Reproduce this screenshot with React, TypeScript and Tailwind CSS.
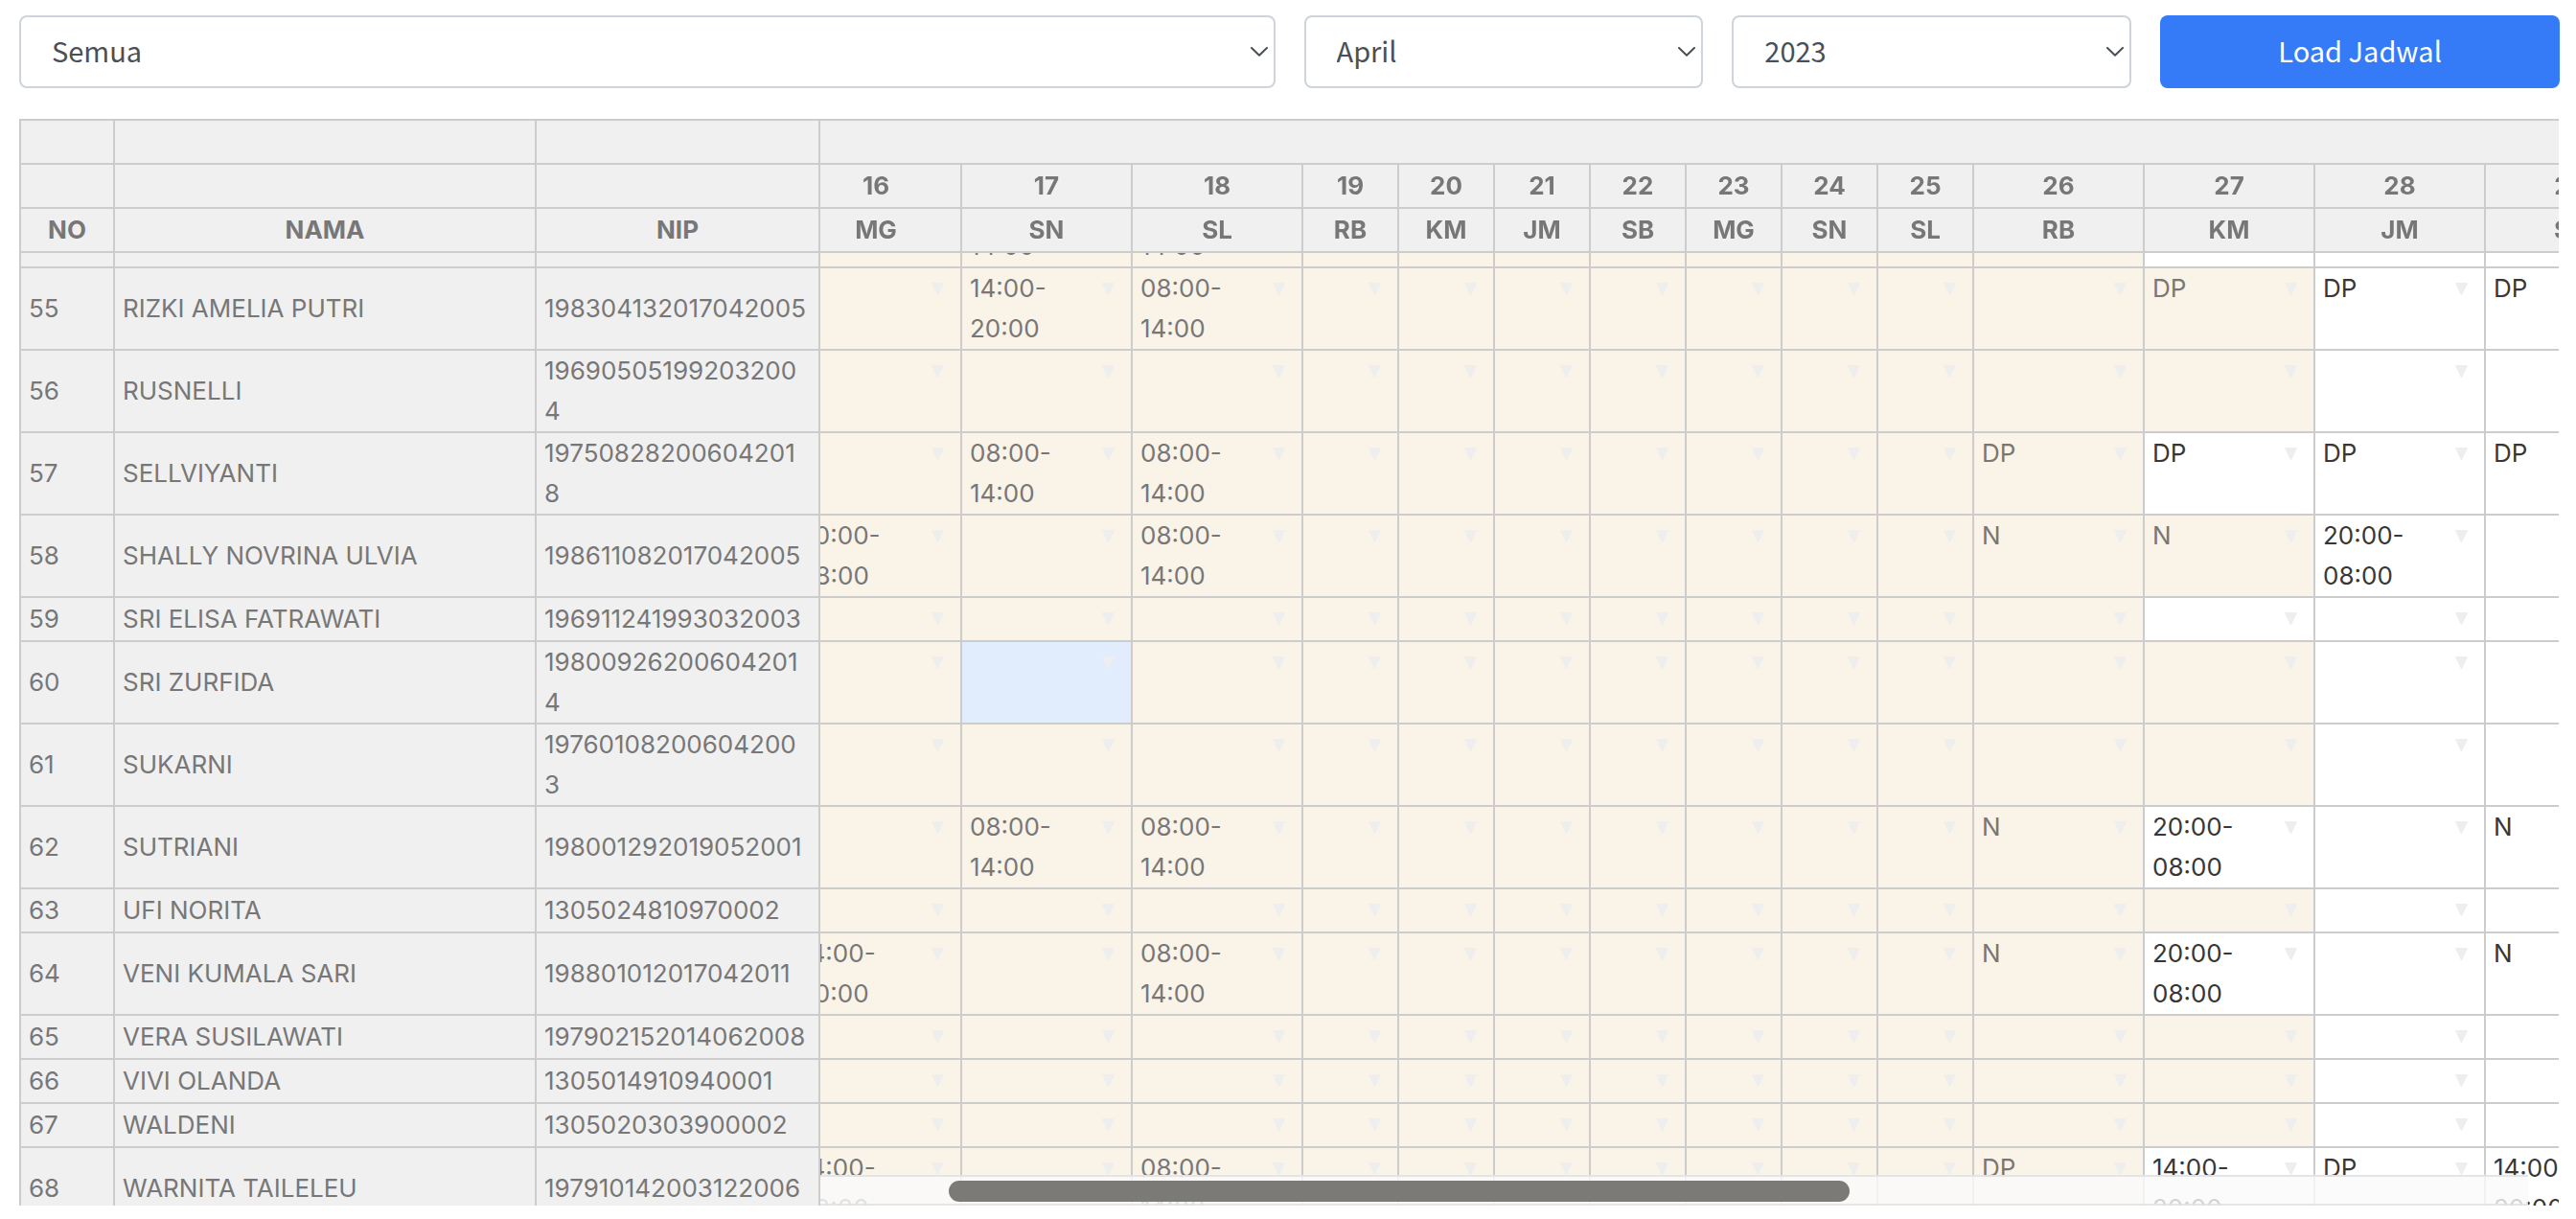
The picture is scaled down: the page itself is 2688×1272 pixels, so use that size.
import { useLayoutEffect, useRef } from "react";

type Shift = { text?: string; open?: boolean; selected?: boolean };
type Employee = { no: number; name: string; nip: string; shifts: Record<number, Shift> };

const days = [
  { day: 16, label: "MG" },
  { day: 17, label: "SN" },
  { day: 18, label: "SL" },
  { day: 19, label: "RB" },
  { day: 20, label: "KM" },
  { day: 21, label: "JM" },
  { day: 22, label: "SB" },
  { day: 23, label: "MG" },
  { day: 24, label: "SN" },
  { day: 25, label: "SL" },
  { day: 26, label: "RB" },
  { day: 27, label: "KM" },
  { day: 28, label: "JM" },
  { day: 29, label: "SB" },
];

const isNarrow = (day: number) => day >= 19 && day <= 25;

const s = (text: string): Shift => ({ text });
const o = (text = ""): Shift => ({ text, open: true });

const employees: Employee[] = [
  { no: 54, name: "", nip: "", shifts: { 17: s("08:00-14:00"), 18: s("08:00-14:00"), 27: o() } },
  { no: 55, name: "RIZKI AMELIA PUTRI", nip: "198304132017042005", shifts: { 17: s("14:00-20:00"), 18: s("08:00-14:00"), 27: s("DP"), 28: o("DP"), 29: o("DP") } },
  { no: 56, name: "RUSNELLI", nip: "196905051992032004", shifts: {} },
  { no: 57, name: "SELLVIYANTI", nip: "197508282006042018", shifts: { 17: s("08:00-14:00"), 18: s("08:00-14:00"), 26: s("DP"), 27: o("DP"), 28: o("DP"), 29: o("DP") } },
  { no: 58, name: "SHALLY NOVRINA ULVIA", nip: "198611082017042005", shifts: { 16: s("20:00-08:00"), 18: s("08:00-14:00"), 26: s("N"), 27: s("N"), 28: o("20:00-08:00") } },
  { no: 59, name: "SRI ELISA FATRAWATI", nip: "196911241993032003", shifts: { 27: o() } },
  { no: 60, name: "SRI ZURFIDA", nip: "198009262006042014", shifts: { 17: { selected: true } } },
  { no: 61, name: "SUKARNI", nip: "197601082006042003", shifts: {} },
  { no: 62, name: "SUTRIANI", nip: "198001292019052001", shifts: { 17: s("08:00-14:00"), 18: s("08:00-14:00"), 26: s("N"), 27: o("20:00-08:00"), 29: o("N") } },
  { no: 63, name: "UFI NORITA", nip: "1305024810970002", shifts: {} },
  { no: 64, name: "VENI KUMALA SARI", nip: "198801012017042011", shifts: { 16: s("14:00-20:00"), 18: s("08:00-14:00"), 26: s("N"), 27: o("20:00-08:00"), 29: o("N") } },
  { no: 65, name: "VERA SUSILAWATI", nip: "197902152014062008", shifts: {} },
  { no: 66, name: "VIVI OLANDA", nip: "1305014910940001", shifts: {} },
  { no: 67, name: "WALDENI", nip: "1305020303900002", shifts: {} },
  { no: 68, name: "WARNITA TAILELEU", nip: "197910142003122006", shifts: { 16: s("14:00-20:00"), 18: s("08:00-14:00"), 26: s("DP"), 27: o("14:00-20:00"), 28: o("DP"), 29: o("14:00-20:00") } },
];

function Filter({ label, value, options }: { label: string; value: string; options: string[] }) {
  return (
    <div className="relative">
      <select
        aria-label={label}
        defaultValue={value}
        className="h-19 w-full appearance-none rounded-lg border-2 border-[#ced4da] bg-white pr-12 pb-0.5 pl-8 text-[#495057]"
      >
        {options.map((option) => (
          <option key={option}>{option}</option>
        ))}
      </select>
      <svg aria-hidden="true" viewBox="0 0 18 10" className="pointer-events-none absolute top-[33px] right-2 h-[10px] w-[18px]">
        <path d="M1 1 9 8.8 17 1" fill="none" stroke="#495057" strokeWidth="2" strokeLinecap="round" strokeLinejoin="round" />
      </svg>
    </div>
  );
}

function ShiftCell({ day, shift = {} }: { day: number; shift?: Shift }) {
  const open = shift.open || day >= 28;
  const background = shift.selected ? "bg-[#e1edfd]" : open ? "bg-white" : "bg-[#faf3e8]";
  const color = open ? "text-[#373737]" : "text-[#777777]";
  return (
    <td className={`border-r-2 border-b-2 border-[#cccccc] px-2 align-top ${background} ${color}`}>
      <div className="flex justify-between">
        <span>{shift.text}</span>
        <button type="button" aria-label={`Pilih jadwal tanggal ${day}`} className="flex h-[42px] w-8 shrink-0 items-center justify-center">
          <svg aria-hidden="true" viewBox="0 0 13 13" className="size-[13px]">
            <path d="M1 0h11q1.3 0 .8 1.1L7.4 12.3q-.9 1.2-1.8 0L.2 1.1Q-.3 0 1 0Z" fill="#eeeeee" />
          </svg>
        </button>
      </div>
    </td>
  );
}

const headCell = "h-[46px] border-r-2 border-b-2 border-[#cccccc] bg-[#f0f0f0] p-0 text-center font-bold";
const fixedCell = "sticky z-10 border-r-2 border-b-2 border-[#cccccc] bg-[#f0f0f0] pl-2 align-middle";

function HeadRow({ labels, cells }: { labels: string[]; cells: (string | number)[] }) {
  return (
    <tr>
      <th className={`${headCell} sticky left-0 z-10 border-l-2`}>{labels[0]}</th>
      <th className={`${headCell} sticky left-[100px] z-10`}>{labels[1]}</th>
      <th className={`${headCell} sticky left-[540px] z-10`}>{labels[2]}</th>
      {cells.map((cell, index) => (
        <th key={index} className={headCell}>
          {cell}
        </th>
      ))}
    </tr>
  );
}

function ScheduleTable() {
  const viewport = useRef<HTMLDivElement>(null);

  useLayoutEffect(() => {
    viewport.current?.scrollTo(30, 70);
  }, []);

  return (
    <div className="relative mr-px min-h-0 flex-1">
      <div ref={viewport} className="h-full overflow-auto [scrollbar-width:none]">
        <table className="w-max table-fixed border-separate border-spacing-0 font-['Inter',sans-serif] text-[26px] leading-[42px] text-[#777777]">
          <colgroup>
            <col className="w-[100px]" />
            <col className="w-[440px]" />
            <col className="w-[296px]" />
            {days.map(({ day }) => (
              <col key={day} className={isNarrow(day) ? "w-[100px]" : "w-[178px]"} />
            ))}
          </colgroup>
          <thead className="sticky top-0 z-20">
            <tr>
              <th className={`${headCell} sticky left-0 z-10 h-[48px] border-t-2 border-l-2`} />
              <th className={`${headCell} sticky left-[100px] z-10 border-t-2`} />
              <th className={`${headCell} sticky left-[540px] z-10 border-t-2`} />
              <th colSpan={days.length} className={`${headCell} border-t-2`} />
            </tr>
            <HeadRow labels={["", "", ""]} cells={days.map(({ day }) => day)} />
            <HeadRow labels={["NO", "NAMA", "NIP"]} cells={days.map(({ label }) => label)} />
          </thead>
          <tbody>
            {employees.map(({ no, name, nip, shifts }) => (
              <tr key={no} className="h-[46px]">
                <td className={`${fixedCell} left-0 border-l-2`}>{no}</td>
                <td className={`${fixedCell} left-[100px]`}>{name}</td>
                <td className={`${fixedCell} left-[540px] pr-3 break-all`}>{nip}</td>
                {days.map(({ day }) => (
                  <ShiftCell key={day} day={day} shift={shifts[day]} />
                ))}
              </tr>
            ))}
          </tbody>
        </table>
      </div>
      <div className="absolute right-8 bottom-0 left-[836px] z-30 h-8 border-y-2 border-[#e0e0e0]/80 bg-[#fafafa]/80">
        <div className="mt-1 ml-[134px] h-[22px] w-[940px] rounded-full bg-[#7c7a77]" />
      </div>
    </div>
  );
}

export default function App() {
  return (
    <main className="flex h-screen flex-col gap-8 bg-white pt-4 pr-[17px] pb-3.5 pl-5">
      <form className="grid grid-cols-[repeat(12,minmax(0,1fr))] gap-x-[30px] font-['Noto_Sans_CJK_SC',sans-serif] text-[29px] *:first:col-span-6 *:not-first:col-span-2">
        <Filter label="Ruangan" value="Semua" options={["Semua"]} />
        <Filter label="Bulan" value="April" options={["Maret", "April", "Mei"]} />
        <Filter label="Tahun" value="2023" options={["2022", "2023", "2024"]} />
        <button type="button" className="h-19 rounded-lg bg-[#357af6] pb-0.5 text-white">
          Load Jadwal
        </button>
      </form>
      <ScheduleTable />
    </main>
  );
}
